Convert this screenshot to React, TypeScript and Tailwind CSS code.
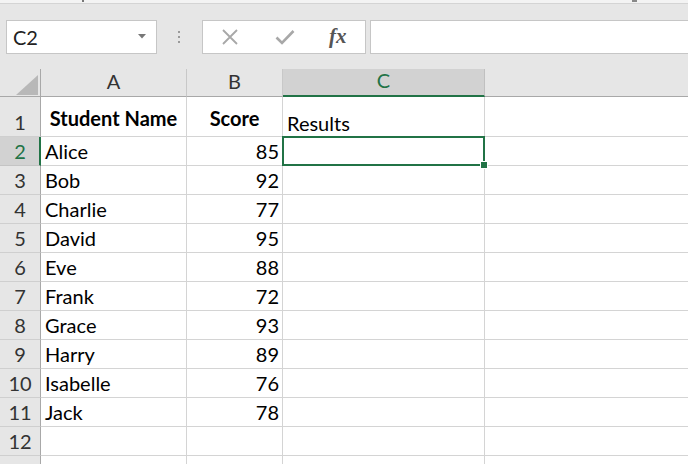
import React from 'react';

const rows: [string, string][] = [
  ['Alice', '85'],
  ['Bob', '92'],
  ['Charlie', '77'],
  ['David', '95'],
  ['Eve', '88'],
  ['Frank', '72'],
  ['Grace', '93'],
  ['Harry', '89'],
  ['Isabelle', '76'],
  ['Jack', '78'],
  ['', ''],
];

const font = { fontFamily: 'Lato, "Open Sans", sans-serif' };

function Toolbar() {
  return (
    <div className="relative h-[69px] bg-[#e6e6e6]">
      <div className="h-[3px] bg-[#f3f3f3] border-b border-[#d4d4d4] box-content" />
      <div className="absolute left-[82px] top-0 h-[2px] w-[2px] bg-[#777]" />
      <div className="absolute left-[632px] top-0 h-[2px] w-[5px] bg-[#888]" />
      <div className="flex items-center pt-[15px] h-[50px]">
        {/* name box */}
        <div className="ml-[6px] w-[151px] h-[34px] bg-white border border-[#c6c6c6] flex items-center justify-between pl-[6px] pr-[10px]">
          <span className="text-[20px] text-[#222]">C2</span>
          <svg width="8" height="5" viewBox="0 0 8 5">
            <path d="M0 0 L8 0 L4 4.5 Z" fill="#777" />
          </svg>
        </div>
        {/* separator dots */}
        <div className="ml-[21px] flex flex-col gap-[3px]">
          <div className="w-[2px] h-[2px] bg-[#9a9a9a]" />
          <div className="w-[2px] h-[2px] bg-[#9a9a9a]" />
          <div className="w-[2px] h-[2px] bg-[#9a9a9a]" />
        </div>
        {/* buttons */}
        <div className="ml-[22px] w-[164px] h-[34px] bg-white border border-[#c6c6c6] flex items-center">
          <svg className="ml-[18px]" width="18" height="18" viewBox="0 0 18 18">
            <path d="M2 2 L16 16 M16 2 L2 16" stroke="#a8a8a8" strokeWidth="1.8" />
          </svg>
          <svg className="ml-[36px]" width="20" height="18" viewBox="0 0 20 18">
            <path d="M1.5 9.5 L7 15 L18.5 3" stroke="#a8a8a8" strokeWidth="2.6" fill="none" />
          </svg>
          <span
            className="ml-[34px] text-[21px] italic font-bold text-[#555] leading-none"
            style={{ fontFamily: '"Liberation Serif", serif' }}
          >
            fx
          </span>
        </div>
        {/* formula input */}
        <div className="ml-[4px] flex-1 h-[34px] bg-white border border-[#c6c6c6] border-r-0" />
      </div>
    </div>
  );
}

function HeaderRow() {
  return (
    <div className="flex h-[28px] bg-[#e6e6e6] text-[20px] text-[#333]">
      <div className="w-[41px] shrink-0 border-r border-b border-[#a8a8a8] relative">
        <svg className="absolute left-[16px] top-[6px]" width="22" height="20" viewBox="0 0 22 20">
          <path d="M22 0 L22 20 L0 20 Z" fill="#b8b8b8" />
        </svg>
      </div>
      <div className="w-[146px] shrink-0 border-r border-[#c8c8c8] border-b border-b-[#a8a8a8] flex items-end justify-center">
        A
      </div>
      <div className="w-[96px] shrink-0 border-r border-[#c8c8c8] border-b border-b-[#a8a8a8] flex items-end justify-center">
        B
      </div>
      <div className="w-[202px] shrink-0 bg-[#d2d2d2] border-r border-[#c0c0c0] border-b-2 border-b-[#217346] flex items-end justify-center text-[#217346]">
        C
      </div>
      <div className="flex-1 border-b border-[#a8a8a8]" />
    </div>
  );
}

function Grid() {
  return (
    <div className="text-[20px] text-black leading-[26px]">
      {/* row 1 */}
      <div className="flex h-[40px]">
        <div className="w-[41px] shrink-0 border-r border-[#a8a8a8] border-b border-b-[#cfcfcf] bg-[#e6e6e6] flex items-end justify-center pb-[1px] text-[#333]">
          1
        </div>
        <div className="w-[146px] shrink-0 border-r border-b border-[#d4d4d4] flex items-center justify-center pt-[3px] font-bold">
          Student Name
        </div>
        <div className="w-[96px] shrink-0 border-r border-b border-[#d4d4d4] flex items-center justify-center pt-[3px] font-bold">
          Score
        </div>
        <div className="w-[202px] shrink-0 border-r border-[#d4d4d4] flex items-end pl-[4px] pb-[1px]">
          Results
        </div>
        <div className="flex-1 border-b border-[#d4d4d4]" />
      </div>
      {rows.map(([name, score], i) => {
        const n = i + 2;
        const sel = n === 2;
        return (
          <div key={n} className="flex h-[29px]">
            <div
              className={
                sel
                  ? 'w-[41px] shrink-0 border-r-2 border-[#217346] border-b border-b-[#c4c4c4] bg-[#d2d2d2] flex items-end justify-center pb-[1px] pl-[1px] text-[#217346]'
                  : 'w-[41px] shrink-0 border-r border-[#a8a8a8] border-b border-b-[#cfcfcf] bg-[#e6e6e6] flex items-end justify-center pb-[1px] text-[#333]'
              }
            >
              {n}
            </div>
            <div className="w-[146px] shrink-0 border-r border-b border-[#d4d4d4] flex items-end pl-[4px] pb-[1px]">
              {name}
            </div>
            <div className="w-[96px] shrink-0 border-r border-b border-[#d4d4d4] flex items-end justify-end pr-[3px] pb-[1px]">
              {score}
            </div>
            {sel ? (
              <div className="w-[203px] shrink-0 -ml-[1px] -mt-[1px] h-[30px] border-2 border-[#217346] relative">
                <div className="absolute -right-[5px] -bottom-[5px] w-[6px] h-[6px] bg-[#217346] border border-white box-content" />
              </div>
            ) : (
              <div className="w-[202px] shrink-0 border-r border-b border-[#d4d4d4]" />
            )}
            <div className="flex-1 border-b border-[#d4d4d4]" />
          </div>
        );
      })}
      {/* row 13, number below the fold */}
      <div className="flex h-[29px]">
        <div className="w-[41px] shrink-0 border-r border-[#a8a8a8] bg-[#e6e6e6]" />
        <div className="w-[146px] shrink-0 border-r border-[#d4d4d4]" />
        <div className="w-[96px] shrink-0 border-r border-[#d4d4d4]" />
        <div className="w-[202px] shrink-0 border-r border-[#d4d4d4]" />
        <div className="flex-1" />
      </div>
    </div>
  );
}

export default function App() {
  return (
    <div className="w-[688px] h-[464px] overflow-hidden bg-white" style={font}>
      <Toolbar />
      <HeaderRow />
      <Grid />
    </div>
  );
}
